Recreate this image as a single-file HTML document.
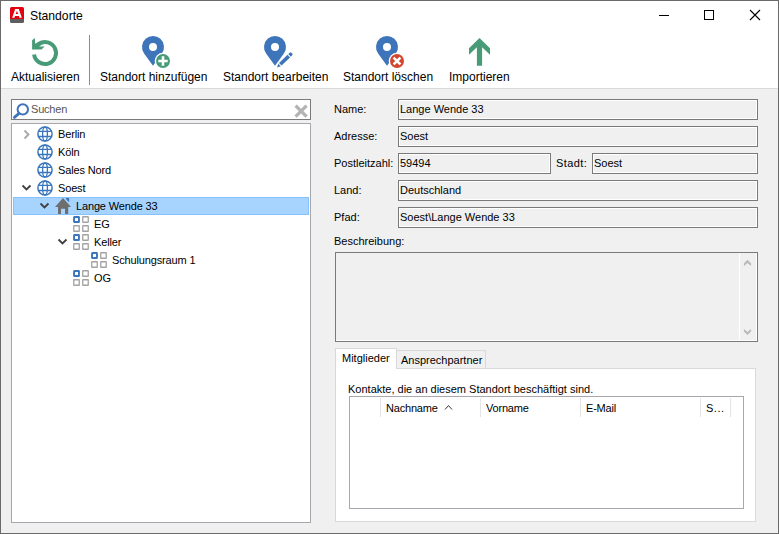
<!DOCTYPE html>
<html><head><meta charset="utf-8">
<style>
*{box-sizing:border-box}
html,body{margin:0;padding:0}
body{width:779px;height:534px;position:relative;overflow:hidden;background:#f0f0f0;font-family:"Liberation Sans",sans-serif;color:#000}
.a{position:absolute}
.t{position:absolute;white-space:nowrap;line-height:14px;font-size:11px}
.tb{font-size:12px}
svg{position:absolute;overflow:visible}
.tbx{position:absolute;height:21px;border:1px solid #7a7a7a;box-shadow:inset 0 0 0 1px #fff;background:#f0f0f0}
</style></head><body>
<!-- title + toolbar white -->
<div class="a" style="left:0;top:0;width:779px;height:88px;background:#fff"></div>
<div class="a" style="left:0;top:88px;width:779px;height:1px;background:#dadada"></div>
<!-- window border -->
<div class="a" style="left:0;top:0;width:779px;height:534px;border:1px solid #6a6a6a"></div>

<!-- app icon -->
<svg style="left:10px;top:7px" width="14" height="16" viewBox="0 0 14 16">
 <path d="M1.5 0H12.5Q14 0 14 1.5V12H0V1.5Q0 0 1.5 0Z" fill="#e3000f"/>
 <path d="M0 12H14V14.5Q14 16 12.5 16H1.5Q0 16 0 14.5Z" fill="#5e5e5e"/>
 <path d="M5.1 1.9H8.8L11.8 10.8H9.5L8.95 9.1H5L4.45 10.8H2.2Z M5.75 7H8.15L6.95 3.7Z" fill="#fff"/>
</svg>
<div class="t tb" style="left:30px;top:9px;font-size:12.2px">Standorte</div>
<!-- caption buttons -->
<div class="a" style="left:659px;top:15px;width:10px;height:1px;background:#000"></div>
<div class="a" style="left:704px;top:10px;width:10px;height:10px;border:1px solid #000"></div>
<svg style="left:750px;top:10px" width="10" height="10" viewBox="0 0 10 10"><path d="M0 0L10 10M10 0L0 10" stroke="#000" stroke-width="1.1"/></svg>

<!-- toolbar -->
<svg style="left:0;top:0" width="779" height="88" viewBox="0 0 779 88">
 <!-- refresh -->
 <path d="M34.1 54.5A11 11 0 1 0 38.7 44" fill="none" stroke="#479c77" stroke-width="4"/>
 <path d="M32.1 40.2L34.8 38.1L35.2 43.7L38.5 41.8L41.5 44.7L39.1 46.5H44.7L41.4 49.6H32.1Z" fill="#479c77"/>
 <!-- separator -->
 <rect x="89" y="35" width="1" height="50" fill="#8c8c8c"/>
 <!-- pin add -->
 <g transform="translate(153,47)">
  <path d="M0 18.7L-8.9 6.5A11 11 0 1 1 8.9 6.5Z M0 -4A4 4 0 1 0 0 4A4 4 0 1 0 0 -4Z" fill="#3d74ba" fill-rule="evenodd"/>
 </g>
 <circle cx="163" cy="61" r="8.3" fill="#fff"/>
 <circle cx="163" cy="61" r="7" fill="#479c77"/>
 <path d="M158.3 61H167.7M163 56.3V65.7" stroke="#fff" stroke-width="2.6"/>
 <!-- pin edit -->
 <g transform="translate(275,47)">
  <path d="M0 18.7L-8.9 6.5A11 11 0 1 1 8.9 6.5Z M0 -4A4 4 0 1 0 0 4A4 4 0 1 0 0 -4Z" fill="#3d74ba" fill-rule="evenodd"/>
 </g>
 <g transform="translate(277,67.5) rotate(-44)">
  <path d="M0 0L3.6 -1.8V1.8Z M4.6 -1.8H16.4V1.8H4.6Z M17.4 -1.8H19.4Q20.6 -1.8 20.6 -0.6V0.6Q20.6 1.8 19.4 1.8H17.4Z" fill="#3d74ba" stroke="#fff" stroke-width="1.6" paint-order="stroke"/>
 </g>
 <!-- pin delete -->
 <g transform="translate(387,47)">
  <path d="M0 18.7L-8.9 6.5A11 11 0 1 1 8.9 6.5Z M0 -4A4 4 0 1 0 0 4A4 4 0 1 0 0 -4Z" fill="#3d74ba" fill-rule="evenodd"/>
 </g>
 <circle cx="397" cy="61" r="8.3" fill="#fff"/>
 <circle cx="397" cy="61" r="7" fill="#d6462f"/>
 <path d="M393.6 57.6L400.4 64.4M400.4 57.6L393.6 64.4" stroke="#fff" stroke-width="2.6"/>
 <!-- import arrow -->
 <path d="M479.5 38L490 48.3V54.8L482.1 47.3V65.7H476.9V47.3L469 54.8V48.3Z" fill="#479c77"/>
</svg>
<div class="t tb" style="left:11px;top:70px">Aktualisieren</div>
<div class="t tb" style="left:100px;top:70px">Standort hinzufügen</div>
<div class="t tb" style="left:223px;top:70px">Standort bearbeiten</div>
<div class="t tb" style="left:343px;top:70px">Standort löschen</div>
<div class="t tb" style="left:449px;top:70px">Importieren</div>

<!-- search box -->
<div class="a" style="left:11px;top:99px;width:300px;height:21px;border:1px solid #7a7a7a;background:#fff"></div>
<svg style="left:0;top:0" width="320" height="130" viewBox="0 0 320 130">
 <circle cx="22.8" cy="109.4" r="5.2" fill="none" stroke="#3d74ba" stroke-width="2"/>
 <path d="M18.8 113.6L14.4 117.4" stroke="#3d74ba" stroke-width="2.8" stroke-linecap="round"/>
 <path d="M295.6 105.6L306.6 116.6M306.6 105.6L295.6 116.6" stroke="#b4b4b4" stroke-width="3.4"/>
</svg>
<div class="t" style="left:31px;top:102px;color:#555;letter-spacing:-0.2px">Suchen</div>

<!-- tree -->
<div class="a" style="left:11px;top:123px;width:300px;height:400px;border:1px solid #a7a7ad;background:#fff"></div>
<div class="a" style="left:13px;top:197px;width:296px;height:18px;border:1px solid #84c3ff;background:#a6d4ff"></div>
<svg style="left:0;top:0" width="779" height="534" viewBox="0 0 779 534">
<g transform="translate(37,126)"><circle cx="8" cy="8" r="7.1" fill="none" stroke="#3a76bd" stroke-width="1.5"/><ellipse cx="8" cy="8" rx="2.4" ry="7" fill="none" stroke="#3a76bd" stroke-width="1.3"/><path d="M1 5.3H15M1 10.5H15" stroke="#3a76bd" stroke-width="1.3"/></g>
<g transform="translate(37,144)"><circle cx="8" cy="8" r="7.1" fill="none" stroke="#3a76bd" stroke-width="1.5"/><ellipse cx="8" cy="8" rx="2.4" ry="7" fill="none" stroke="#3a76bd" stroke-width="1.3"/><path d="M1 5.3H15M1 10.5H15" stroke="#3a76bd" stroke-width="1.3"/></g>
<g transform="translate(37,162)"><circle cx="8" cy="8" r="7.1" fill="none" stroke="#3a76bd" stroke-width="1.5"/><ellipse cx="8" cy="8" rx="2.4" ry="7" fill="none" stroke="#3a76bd" stroke-width="1.3"/><path d="M1 5.3H15M1 10.5H15" stroke="#3a76bd" stroke-width="1.3"/></g>
<g transform="translate(37,180)"><circle cx="8" cy="8" r="7.1" fill="none" stroke="#3a76bd" stroke-width="1.5"/><ellipse cx="8" cy="8" rx="2.4" ry="7" fill="none" stroke="#3a76bd" stroke-width="1.3"/><path d="M1 5.3H15M1 10.5H15" stroke="#3a76bd" stroke-width="1.3"/></g>
<path d="M24.5 130.5L28.5 134.5L24.5 138.5" fill="none" stroke="#aaaaaa" stroke-width="1.9"/>
<path d="M22.5 185.5L26.5 189.5L30.5 185.5" fill="none" stroke="#404040" stroke-width="1.8"/>
<path d="M40.5 203.5L44.5 207.5L48.5 203.5" fill="none" stroke="#404040" stroke-width="1.8"/>
<path d="M58.5 239.5L62.5 243.5L66.5 239.5" fill="none" stroke="#404040" stroke-width="1.8"/>
<path d="M63 198L71 207H68.2V214H65V208.7H61V214H58V207H55Z" fill="#6e6e6e"/><path d="M66 198H69.1V201.8H68.4L66 199.1Z" fill="#3a76bd"/>
<g transform="translate(73,216)"><rect x="1.05" y="1.05" width="4.9" height="4.9" rx="0.3" fill="#fff" stroke="#3a76bd" stroke-width="1.9"/><rect x="9.75" y="0.75" width="5.5" height="5.5" rx="0.2" fill="none" stroke="#a3a3a3" stroke-width="1.3"/><rect x="0.75" y="9.75" width="5.5" height="5.5" rx="0.2" fill="none" stroke="#a3a3a3" stroke-width="1.3"/><rect x="9.75" y="9.75" width="5.5" height="5.5" rx="0.2" fill="none" stroke="#a3a3a3" stroke-width="1.3"/></g>
<g transform="translate(73,234)"><rect x="1.05" y="1.05" width="4.9" height="4.9" rx="0.3" fill="#fff" stroke="#3a76bd" stroke-width="1.9"/><rect x="9.75" y="0.75" width="5.5" height="5.5" rx="0.2" fill="none" stroke="#a3a3a3" stroke-width="1.3"/><rect x="0.75" y="9.75" width="5.5" height="5.5" rx="0.2" fill="none" stroke="#a3a3a3" stroke-width="1.3"/><rect x="9.75" y="9.75" width="5.5" height="5.5" rx="0.2" fill="none" stroke="#a3a3a3" stroke-width="1.3"/></g>
<g transform="translate(91,252)"><rect x="1.05" y="1.05" width="4.9" height="4.9" rx="0.3" fill="#fff" stroke="#3a76bd" stroke-width="1.9"/><rect x="9.75" y="0.75" width="5.5" height="5.5" rx="0.2" fill="none" stroke="#a3a3a3" stroke-width="1.3"/><rect x="0.75" y="9.75" width="5.5" height="5.5" rx="0.2" fill="none" stroke="#a3a3a3" stroke-width="1.3"/><rect x="9.75" y="9.75" width="5.5" height="5.5" rx="0.2" fill="none" stroke="#a3a3a3" stroke-width="1.3"/></g>
<g transform="translate(73,270)"><rect x="1.05" y="1.05" width="4.9" height="4.9" rx="0.3" fill="#fff" stroke="#3a76bd" stroke-width="1.9"/><rect x="9.75" y="0.75" width="5.5" height="5.5" rx="0.2" fill="none" stroke="#a3a3a3" stroke-width="1.3"/><rect x="0.75" y="9.75" width="5.5" height="5.5" rx="0.2" fill="none" stroke="#a3a3a3" stroke-width="1.3"/><rect x="9.75" y="9.75" width="5.5" height="5.5" rx="0.2" fill="none" stroke="#a3a3a3" stroke-width="1.3"/></g>
</svg>
<div class="t" style="letter-spacing:-0.15px;left:58px;top:127px">Berlin</div>
<div class="t" style="letter-spacing:-0.15px;left:58px;top:145px">Köln</div>
<div class="t" style="letter-spacing:-0.15px;left:58px;top:163px">Sales Nord</div>
<div class="t" style="letter-spacing:-0.15px;left:58px;top:181px">Soest</div>
<div class="t" style="letter-spacing:-0.15px;left:76px;top:199px">Lange Wende 33</div>
<div class="t" style="letter-spacing:-0.15px;left:94px;top:217px">EG</div>
<div class="t" style="letter-spacing:-0.15px;left:94px;top:235px">Keller</div>
<div class="t" style="letter-spacing:-0.15px;left:112px;top:253px">Schulungsraum 1</div>
<div class="t" style="letter-spacing:-0.15px;left:94px;top:271px">OG</div>

<!-- right form labels -->
<div class="t" style="left:334px;top:102px">Name:</div>
<div class="t" style="left:334px;top:129px">Adresse:</div>
<div class="t" style="left:334px;top:156px">Postleitzahl:</div>
<div class="t" style="left:556px;top:156px;letter-spacing:0.4px">Stadt:</div>
<div class="t" style="left:334px;top:183px">Land:</div>
<div class="t" style="left:334px;top:210px">Pfad:</div>
<div class="t" style="left:334px;top:234px">Beschreibung:</div>

<!-- textboxes -->
<div class="tbx" style="left:398px;top:99px;width:360px"></div>
<div class="tbx" style="left:398px;top:126px;width:360px"></div>
<div class="tbx" style="left:398px;top:153px;width:153px"></div>
<div class="tbx" style="left:592px;top:153px;width:166px"></div>
<div class="tbx" style="left:398px;top:180px;width:360px"></div>
<div class="tbx" style="left:398px;top:207px;width:360px"></div>
<div class="t" style="left:400px;top:102px">Lange Wende 33</div>
<div class="t" style="left:400px;top:129px">Soest</div>
<div class="t" style="left:400px;top:156px">59494</div>
<div class="t" style="left:594px;top:156px">Soest</div>
<div class="t" style="left:400px;top:183px">Deutschland</div>
<div class="t" style="left:400px;top:210px">Soest\Lange Wende 33</div>
<!-- description -->
<div class="a" style="left:335px;top:252px;width:423px;height:90px;border:1px solid #7a7a7a;background:#f0f0f0"></div>
<div class="a" style="left:739px;top:253px;width:1px;height:88px;background:#fff"></div>
<div class="a" style="left:756px;top:253px;width:1px;height:88px;background:#fff"></div>
<div class="a" style="left:336px;top:340px;width:421px;height:1px;background:#fff"></div>
<svg style="left:0;top:0" width="779" height="534" viewBox="0 0 779 534">
 <path d="M743.9 263.5L747.5 259.8L751.1 263.5V266.1L747.5 262.9L743.9 266.1Z" fill="#b9b9b9"/>
 <path d="M743.9 328.9L747.5 332.1L751.1 328.9V331.5L747.5 335L743.9 331.5Z" fill="#b9b9b9"/>
</svg>
<!-- tabs -->
<div class="a" style="left:335px;top:368px;width:421px;height:154px;border:1px solid #d9d9d9;background:#fff"></div>
<div class="a" style="left:396px;top:350px;width:90px;height:19px;border:1px solid #d9d9d9;background:#f0f0f0"></div>
<div class="a" style="left:335px;top:348px;width:62px;height:21px;border:1px solid #d9d9d9;border-bottom:none;background:#fff"></div>
<div class="t" style="left:342px;top:351px">Mitglieder</div>
<div class="t" style="left:401px;top:353px">Ansprechpartner</div>
<div class="t" style="left:348px;top:382px">Kontakte, die an diesem Standort beschäftigt sind.</div>
<!-- listview -->
<div class="a" style="left:349px;top:396px;width:395px;height:113px;border:1px solid #a7a7ad;background:#fff"></div>
<div class="a" style="left:380px;top:398px;width:1px;height:19px;background:#e5e5e5"></div>
<div class="a" style="left:480px;top:398px;width:1px;height:19px;background:#e5e5e5"></div>
<div class="a" style="left:580px;top:398px;width:1px;height:19px;background:#e5e5e5"></div>
<div class="a" style="left:700px;top:398px;width:1px;height:19px;background:#e5e5e5"></div>
<div class="a" style="left:730px;top:398px;width:1px;height:19px;background:#e5e5e5"></div>
<div class="t" style="letter-spacing:-0.2px;left:386px;top:401px">Nachname</div>
<svg style="left:0;top:0" width="779" height="534" viewBox="0 0 779 534">
 <path d="M445 409.5L448.5 405.5L452 409.5" fill="none" stroke="#3a3a3a" stroke-width="1"/>
</svg>
<div class="t" style="letter-spacing:-0.2px;left:486px;top:401px">Vorname</div>
<div class="t" style="letter-spacing:-0.2px;left:586px;top:401px">E-Mail</div>
<div class="t" style="letter-spacing:0.5px;left:706px;top:401px">S...</div>
</body></html>
